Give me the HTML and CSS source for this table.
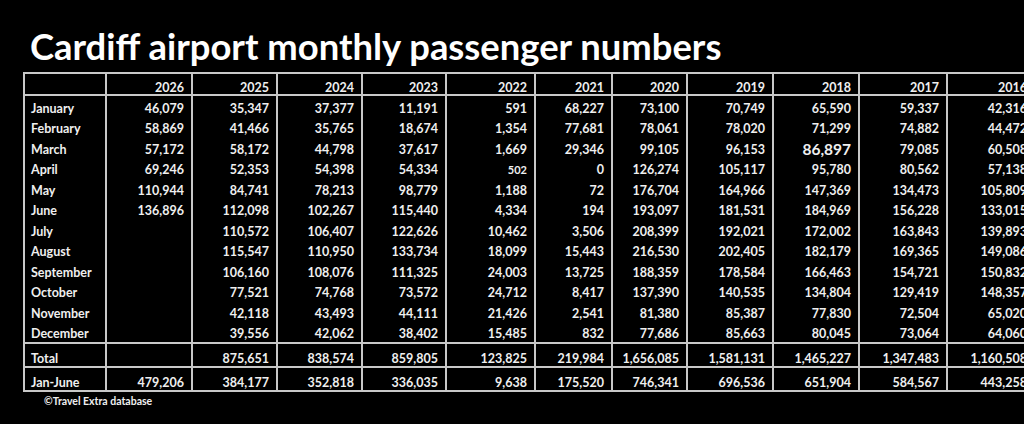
FILE: index.html
```html
<!DOCTYPE html>
<html lang="en">
<head>
<meta charset="utf-8">
<title>Cardiff airport monthly passenger numbers</title>
<link rel="stylesheet" href="styles.css">
</head>
<body>
<h1 class="title">Cardiff airport monthly passenger numbers</h1>
<div class="grid">
  <div class="c hd lbl"></div><div class="c hd">2026</div><div class="c hd">2025</div><div class="c hd">2024</div><div class="c hd">2023</div><div class="c hd">2022</div><div class="c hd">2021</div><div class="c hd">2020</div><div class="c hd">2019</div><div class="c hd">2018</div><div class="c hd">2017</div><div class="c hd">2016</div>

  <div class="c m lbl">January</div><div class="c m">46,079</div><div class="c m">35,347</div><div class="c m">37,377</div><div class="c m">11,191</div><div class="c m">591</div><div class="c m">68,227</div><div class="c m">73,100</div><div class="c m">70,749</div><div class="c m">65,590</div><div class="c m">59,337</div><div class="c m">42,316</div>
  <div class="c m lbl">February</div><div class="c m">58,869</div><div class="c m">41,466</div><div class="c m">35,765</div><div class="c m">18,674</div><div class="c m">1,354</div><div class="c m">77,681</div><div class="c m">78,061</div><div class="c m">78,020</div><div class="c m">71,299</div><div class="c m">74,882</div><div class="c m">44,472</div>
  <div class="c m lbl">March</div><div class="c m">57,172</div><div class="c m">58,172</div><div class="c m">44,798</div><div class="c m">37,617</div><div class="c m">1,669</div><div class="c m">29,346</div><div class="c m">99,105</div><div class="c m">96,153</div><div class="c m big">86,897</div><div class="c m">79,085</div><div class="c m">60,508</div>
  <div class="c m lbl">April</div><div class="c m">69,246</div><div class="c m">52,353</div><div class="c m">54,398</div><div class="c m">54,334</div><div class="c m small">502</div><div class="c m">0</div><div class="c m">126,274</div><div class="c m">105,117</div><div class="c m">95,780</div><div class="c m">80,562</div><div class="c m">57,138</div>
  <div class="c m lbl">May</div><div class="c m">110,944</div><div class="c m">84,741</div><div class="c m">78,213</div><div class="c m">98,779</div><div class="c m">1,188</div><div class="c m">72</div><div class="c m">176,704</div><div class="c m">164,966</div><div class="c m">147,369</div><div class="c m">134,473</div><div class="c m">105,809</div>
  <div class="c m lbl">June</div><div class="c m">136,896</div><div class="c m">112,098</div><div class="c m">102,267</div><div class="c m">115,440</div><div class="c m">4,334</div><div class="c m">194</div><div class="c m">193,097</div><div class="c m">181,531</div><div class="c m">184,969</div><div class="c m">156,228</div><div class="c m">133,015</div>
  <div class="c m lbl">July</div><div class="c m"></div><div class="c m">110,572</div><div class="c m">106,407</div><div class="c m">122,626</div><div class="c m">10,462</div><div class="c m">3,506</div><div class="c m">208,399</div><div class="c m">192,021</div><div class="c m">172,002</div><div class="c m">163,843</div><div class="c m">139,893</div>
  <div class="c m lbl">August</div><div class="c m"></div><div class="c m">115,547</div><div class="c m">110,950</div><div class="c m">133,734</div><div class="c m">18,099</div><div class="c m">15,443</div><div class="c m">216,530</div><div class="c m">202,405</div><div class="c m">182,179</div><div class="c m">169,365</div><div class="c m">149,086</div>
  <div class="c m lbl">September</div><div class="c m"></div><div class="c m">106,160</div><div class="c m">108,076</div><div class="c m">111,325</div><div class="c m">24,003</div><div class="c m">13,725</div><div class="c m">188,359</div><div class="c m">178,584</div><div class="c m">166,463</div><div class="c m">154,721</div><div class="c m">150,832</div>
  <div class="c m lbl">October</div><div class="c m"></div><div class="c m">77,521</div><div class="c m">74,768</div><div class="c m">73,572</div><div class="c m">24,712</div><div class="c m">8,417</div><div class="c m">137,390</div><div class="c m">140,535</div><div class="c m">134,804</div><div class="c m">129,419</div><div class="c m">148,357</div>
  <div class="c m lbl">November</div><div class="c m"></div><div class="c m">42,118</div><div class="c m">43,493</div><div class="c m">44,111</div><div class="c m">21,426</div><div class="c m">2,541</div><div class="c m">81,380</div><div class="c m">85,387</div><div class="c m">77,830</div><div class="c m">72,504</div><div class="c m">65,020</div>
  <div class="c m lbl">December</div><div class="c m"></div><div class="c m">39,556</div><div class="c m">42,062</div><div class="c m">38,402</div><div class="c m">15,485</div><div class="c m">832</div><div class="c m">77,686</div><div class="c m">85,663</div><div class="c m">80,045</div><div class="c m">73,064</div><div class="c m">64,060</div>

  <div class="c tot lbl">Total</div><div class="c tot"></div><div class="c tot">875,651</div><div class="c tot">838,574</div><div class="c tot">859,805</div><div class="c tot">123,825</div><div class="c tot">219,984</div><div class="c tot">1,656,085</div><div class="c tot">1,581,131</div><div class="c tot">1,465,227</div><div class="c tot">1,347,483</div><div class="c tot">1,160,508</div>
  <div class="c tot lbl">Jan-June</div><div class="c tot">479,206</div><div class="c tot">384,177</div><div class="c tot">352,818</div><div class="c tot">336,035</div><div class="c tot">9,638</div><div class="c tot">175,520</div><div class="c tot">746,341</div><div class="c tot">696,536</div><div class="c tot">651,904</div><div class="c tot">584,567</div><div class="c tot">443,258</div>
</div>
<p class="credit">©Travel Extra database</p>
</body>
</html>
```
FILE: styles.css
```css
html, body {
  margin: 0;
  padding: 0;
  background: #000;
  overflow: hidden;
}
body {
  width: 1024px;
  height: 424px;
  font-family: Lato, "Open Sans", sans-serif;
  color: #efefef;
}
.title {
  margin: 27.5px 0 8px 30px;
  font-size: 36.4px;
  line-height: 36.4px;
  font-weight: 700;
  color: #fff;
  white-space: nowrap;
}
.grid {
  display: grid;
  grid-template-columns: 82px 86px 85px 85px 84px 89px 77px 75px 86px 86px 88px 88px;
  width: max-content;
  margin-left: 23px;
  border-left: 2px solid #c8c8c8;
  border-top: 2px solid #c8c8c8;
  border-bottom: 2px solid #c8c8c8;
}
.c {
  box-sizing: border-box;
  border-right: 2px solid #c8c8c8;
  padding: 4px 7px 0 6px;
  text-align: right;
  font-size: 12.5px;
  line-height: 17.5px;
  font-weight: 700;
  white-space: nowrap;
}
.lbl {
  text-align: left;
}
.hd {
  height: 22px;
  padding-top: 5px;
  border-bottom: 2px solid #c8c8c8;
}
.m {
  height: 20.5px;
}
.tot {
  height: 24px;
  padding-top: 6px;
  border-top: 2px solid #c8c8c8;
}
.big {
  font-size: 15.5px;
}
.small {
  font-size: 11px;
}
.credit {
  margin: 2px 0 0 44px;
  font-size: 10.5px;
  line-height: 14px;
  font-weight: 700;
}
```
